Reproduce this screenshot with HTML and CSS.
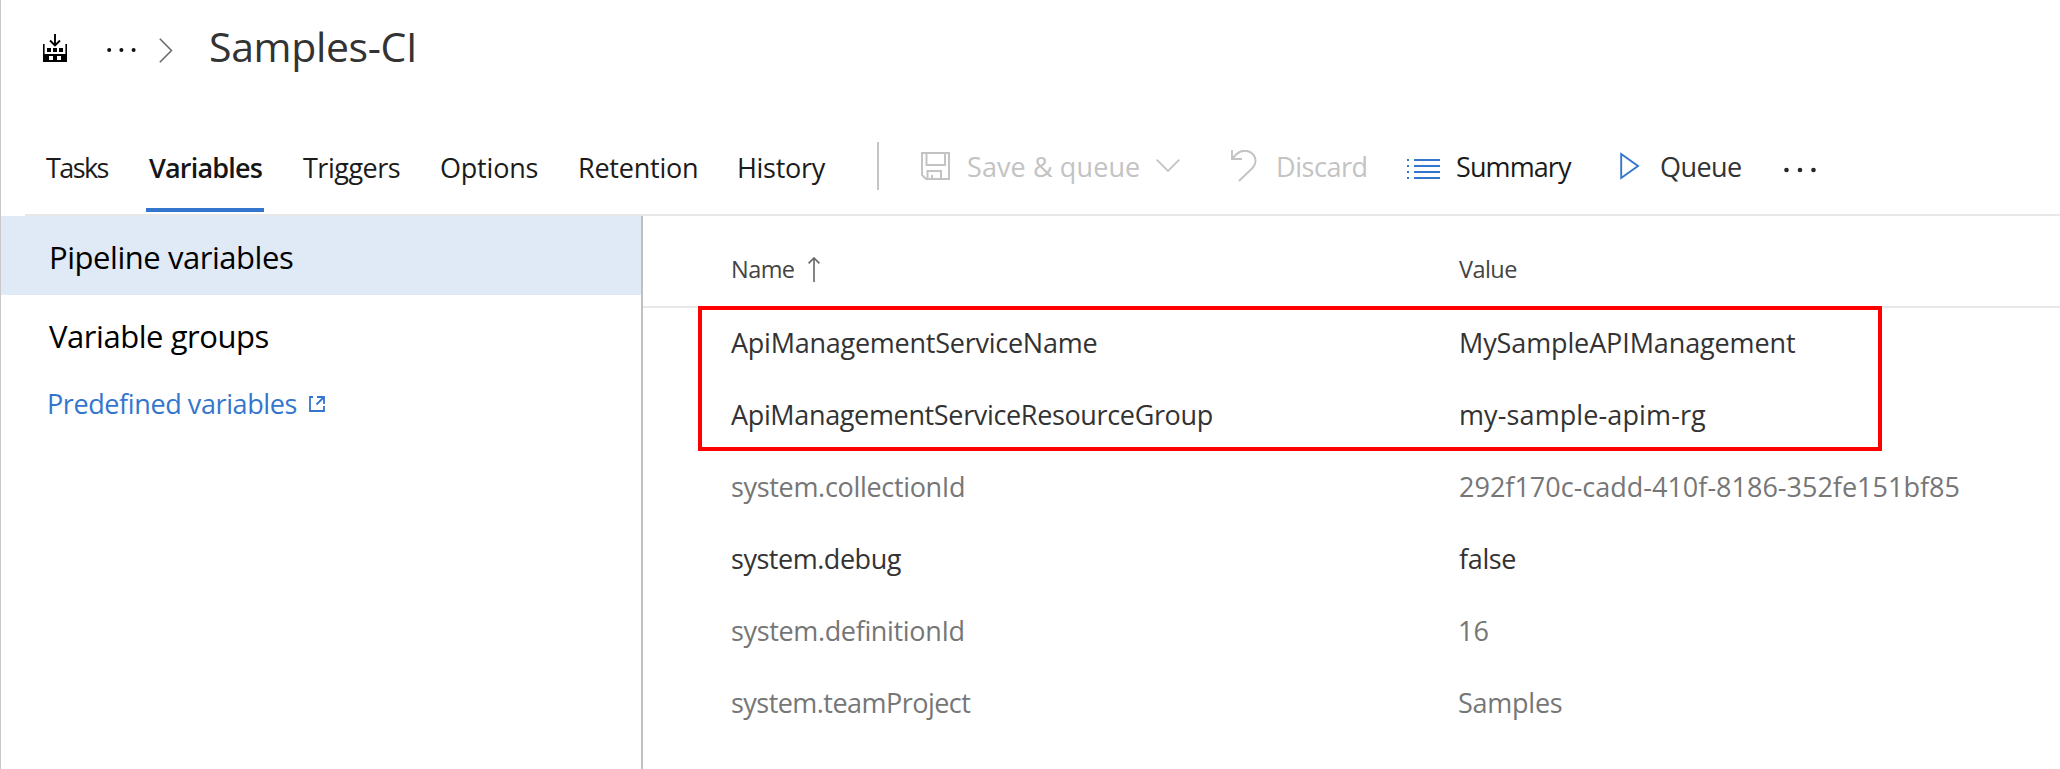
FILE: index.html
```
<!DOCTYPE html>
<html lang="en">
<head>
<meta charset="utf-8">
<title>Samples-CI</title>
<link rel="stylesheet" href="styles.css">
</head>
<body>
<div class="page">
  <header class="crumbs">
    <svg class="build-icon" width="24" height="28" viewBox="0 0 24 28">
      <path d="M12 0v11M7 6.500l5 5 5-5" fill="none" stroke="#000" stroke-width="1.9"/>
      <path d="M0 10h1.600v10H22.400V10H24v18H0z" fill="#000"/>
      <path d="M4 14h4v4H4zM10 14h4v4h-4zM16 14h4v4h-4z" fill="#000"/>
      <path d="M6 22h4v4H6zM14 22h4v4h-4z" fill="#fff"/>
    </svg>
    <svg class="crumb-dots" width="30" height="6" viewBox="0 0 30 6" fill="#111"><circle cx="2.2" cy="3" r="2"/><circle cx="14.4" cy="3" r="2"/><circle cx="26.6" cy="3" r="2"/></svg>
    <svg class="crumb-chevron" width="14" height="25" viewBox="0 0 14 25" fill="none" stroke="#666" stroke-width="1.5"><path d="M.8.8 12.500 12.500.8 24.200"/></svg>
    <h1 class="title">Samples-CI</h1>
  </header>

  <div class="toolbar">
    <nav class="tabs">
      <a class="tab tab-tasks">Tasks</a>
      <a class="tab tab-active">Variables</a>
      <a class="tab tab-triggers">Triggers</a>
      <a class="tab tab-options">Options</a>
      <a class="tab tab-retention">Retention</a>
      <a class="tab tab-history">History</a>
    </nav>
    <span class="divider"></span>
    <div class="commands">
      <div class="command disabled">
        <svg width="29" height="33" viewBox="0 0 29 33" fill="none" stroke="#c3c3c3" stroke-width="2"><path d="M1 3h27v26H5l-4-4zM5.500 3v12h18.500V3M6.500 29v-8H20v8M11 29v-4"/></svg>
        <span class="label label-save">Save &amp; queue</span>
        <svg class="drop" width="24" height="33" viewBox="0 0 24 33" fill="none" stroke="#c3c3c3" stroke-width="1.800"><path d="M.7 9.700 12 21 23.300 9.700"/></svg>
      </div>
      <div class="command disabled">
        <svg width="26" height="33" viewBox="0 0 26 33" fill="none" stroke="#c3c3c3" stroke-width="1.900"><path d="M1 0v9h10M1.500 8.500 5 4.500C10-.5 17-.3 21.200 3.500 25.500 7.500 25.700 13.500 21.500 18L8 31"/></svg>
        <span class="label label-discard">Discard</span>
      </div>
      <div class="command">
        <svg width="33" height="33" viewBox="0 0 33 33" fill="none" stroke="#3476cd" stroke-width="2"><path d="M0 10h2M7 10h26M0 16h2M7 16h26M0 22h2M7 22h26M0 28h2M7 28h26"/></svg>
        <span class="label label-summary">Summary</span>
      </div>
      <div class="command queue">
        <svg width="20" height="33" viewBox="0 0 20 33" fill="none" stroke="#3476cd" stroke-width="1.900"><path d="M1.200 4 18 16 1.200 28z"/></svg>
        <span class="label label-queue">Queue</span>
      </div>
      <div class="command">
        <svg width="33" height="33" viewBox="0 0 33 33" fill="#262626"><circle cx="2.500" cy="20" r="2.300"/><circle cx="16" cy="20" r="2.300"/><circle cx="29.500" cy="20" r="2.300"/></svg>
      </div>
    </div>
  </div>

  <div class="body">
    <aside class="side">
      <a class="side-item selected">Pipeline variables</a>
      <a class="side-item groups">Variable groups</a>
      <a class="side-link">Predefined variables
        <svg width="16" height="16" viewBox="0 0 16 16" fill="none" stroke="#3476cd" stroke-width="1.800"><path d="M4 1H1v14h14v-5M7.500 8.500 14.500 1.500M8 1h7v7"/></svg>
      </a>
    </aside>
    <main class="main">
      <div class="row head">
        <span class="name-head">Name <svg width="12" height="25" viewBox="0 0 12 25" fill="none" stroke="#666" stroke-width="1.600"><path d="M6 1v24M.6 6.400 6 1l5.400 5.400"/></svg></span>
        <span class="value-head">Value</span>
      </div>
      <div class="row"><span class="ls-27">ApiManagementServiceName</span><span class="value ls-12">MySampleAPIManagement</span></div>
      <div class="row"><span class="ls-37">ApiManagementServiceResourceGroup</span><span class="value ls-plus">my-sample-apim-rg</span></div>
      <div class="row muted"><span class="ls-32">system.collectionId</span><span class="value">292f170c-cadd-410f-8186-352fe151bf85</span></div>
      <div class="row"><span class="ls-47">system.debug</span><span class="value ls-37">false</span></div>
      <div class="row muted"><span class="ls-37">system.definitionId</span><span>16</span></div>
      <div class="row muted"><span class="ls-54">system.teamProject</span><span class="ls-27">Samples</span></div>
      <div class="highlight"></div>
    </main>
  </div>
</div>
</body>
</html>
```
FILE: styles.css
```
* { box-sizing: border-box; }
body {
  margin: 0;
  background: #fff;
  font-family: "Open Sans", "Noto Sans", sans-serif;
  font-size: 27px;
  color: #333;
}
svg { display: block; flex: none; }
.page {
  height: 769px;
  border-left: 1px solid #c8c8c8;
  display: flex;
  flex-direction: column;
  overflow: hidden;
}

.crumbs { display: flex; align-items: center; height: 92px; padding: 0 0 0 42px; }
.build-icon { margin-top: 4px; }
.crumb-dots { margin: 8px 0 0 40px; }
.crumb-chevron { margin: 8px 0 0 22px; }
.title { margin: 1px 0 0 36px; font-size: 41px; font-weight: 400; line-height: 93px; letter-spacing: -0.35px; }

.toolbar {
  display: flex;
  height: 124px;
  margin-left: 24px;
  padding: 29px 0 0 21px;
  border-bottom: 2px solid #e8e8e8;
}
.tabs { display: grid; grid-template-columns: 100px 157px 137px 138px 159px 140px; }
.tab { height: 91px; line-height: 93px; color: #1b1b1b; white-space: nowrap; }
.tab-active {
  width: 118px;
  padding-left: 3px;
  color: #161616;
  font-weight: 600;
  letter-spacing: -0.82px;
  box-shadow: inset 0 -4px #3476cd;
}
.tab-tasks { letter-spacing: -1.6px; }
.tab-triggers { letter-spacing: -0.5px; }
.tab-options { letter-spacing: -0.2px; }
.tab-retention { letter-spacing: -0.23px; }
.tab-history { letter-spacing: -0.3px; }
.divider { width: 2px; height: 48px; margin-top: 21px; background: #c4c4c4; }
.commands { display: grid; grid-template-columns: 310px 176px 213px 164px 40px; margin-left: 42px; height: 91px; }
.command { display: flex; align-items: center; color: #1b1b1b; }
.label { line-height: 91px; white-space: nowrap; }
.label-save { width: 189px; margin-left: 17px; letter-spacing: 0.1px; }
.label-discard { margin-left: 19px; letter-spacing: -0.45px; }
.label-summary { margin-left: 16px; letter-spacing: -0.9px; }
.label-queue { margin-left: 20px; letter-spacing: -0.57px; }
.disabled { color: #c3c3c3; }
.queue { color: #333; }

.body { display: flex; flex: 1; }
.side { width: 642px; border-right: 2px solid #c0c0c0; }
.side-item { display: block; height: 79px; padding-left: 48px; font-size: 31px; line-height: 82px; letter-spacing: -0.45px; color: #000; }
.selected { background: #e0eaf6; }
.groups { letter-spacing: -0.45px; }
.side-link { display: flex; align-items: center; gap: 12px; padding-left: 46px; line-height: 59px; letter-spacing: -0.4px; color: #3476cd; }

.main { position: relative; flex: 1; }
.row { display: grid; grid-template-columns: 727px 1fr; height: 72px; padding-left: 88px; line-height: 69px; color: #333; }
.head { height: 92px; line-height: 106px; font-size: 23.5px; letter-spacing: -0.55px; border-bottom: 2px solid #e8e8e8; color: #444; }
.name-head { display: flex; align-items: center; gap: 13px; height: 106px; }
.value-head, .value { padding-left: 1px; }
.muted { color: #767676; }
.ls-12 { letter-spacing: -0.12px; }
.ls-27 { letter-spacing: -0.25px; }
.ls-32 { letter-spacing: -0.32px; }
.ls-37 { letter-spacing: -0.35px; }
.ls-47 { letter-spacing: -0.47px; }
.ls-54 { letter-spacing: -0.54px; }
.ls-plus { letter-spacing: 0.11px; }
.highlight { position: absolute; left: 55px; top: 90px; width: 1184px; height: 145px; border: 4px solid #f00; }
```
